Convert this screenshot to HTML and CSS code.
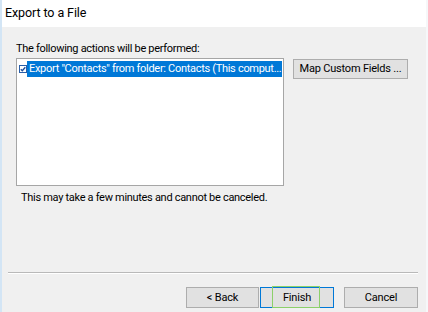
FILE: index.html
```html
<!DOCTYPE html>
<html>
<head>
<meta charset="utf-8">
<link rel="stylesheet" href="styles.css">
</head>
<body>
<div class="window">
  <div class="header"><span class="title">Export to a File</span></div>
  <div class="main">
    <div class="label">The following actions will be performed:</div>
    <div class="row">
      <div class="listbox">
        <div class="item">
          <svg class="check" width="8" height="8" viewBox="0 0 8 8"><rect x="0.5" y="0.5" width="7" height="7" fill="#fff" stroke="#2a5ea8"/><path d="M1.8 4.2 L3.3 5.7 L6.3 2.2" fill="none" stroke="#1f4e9c" stroke-width="1.4"/></svg>
          <span class="sel">Export "Contacts" from folder: Contacts (This comput...</span>
        </div>
      </div>
      <button class="btn map">Map Custom Fields ...</button>
    </div>
    <div class="note">This may take a few minutes and cannot be canceled.</div>
  </div>
  <div class="footer">
    <div class="sep"></div>
    <div class="buttons">
      <button class="btn back">&lt; Back</button>
      <button class="btn finish">Finish</button>
      <button class="btn cancel">Cancel</button>
    </div>
  </div>
</div>
</body>
</html>
```

FILE: styles.css
```css
* { box-sizing: border-box; }
html, body { margin: 0; padding: 0; }
body {
  width: 428px;
  height: 312px;
  overflow: hidden;
  font-family: Roboto, "Noto Sans", sans-serif;
  font-size: 11px;
  letter-spacing: -0.3px;
  color: #000;
}
.window {
  width: 428px;
  height: 312px;
  display: flex;
  flex-direction: column;
  background: #f0f0f0;
  border-left: 2px solid #d3e5f5;
  border-right: 2px solid #f6f7f9;
}
.header {
  height: 27px;
  background: #fff;
  padding-left: 3px;
  display: flex;
  align-items: center;
}
.title {
  font-size: 12.5px;
  letter-spacing: -0.1px;
  line-height: 16px;
  margin-top: -1px;
}
.main {
  flex: 1;
  padding: 14px 0 0 14px;
  display: flex;
  flex-direction: column;
}
.label {
  line-height: 16px;
  height: 16px;
  margin-bottom: 1px;
}
.row {
  display: flex;
  align-items: flex-start;
}
.listbox {
  width: 268px;
  height: 128px;
  background: #fff;
  border: 1px solid #a6a6a6;
  padding: 2px 1px 0 2px;
}
.item {
  display: flex;
  align-items: center;
  height: 16px;
}
.check {
  flex: none;
}
.sel {
  flex: 1;
  background: #0078d7;
  color: #fff;
  height: 16px;
  line-height: 16px;
  padding-left: 2px;
  white-space: nowrap;
  overflow: hidden;
}
.btn {
  font-family: inherit;
  font-size: 11px;
  letter-spacing: -0.2px;
  color: #000;
  background: #e1e1e1;
  border: 1px solid #adadad;
  padding: 0;
  margin: 0;
  height: 21px;
  line-height: 18px;
}
.map {
  width: 115px;
  height: 20px;
  margin-left: 9px;
  margin-top: 1px;
}
.note {
  margin-top: 4px;
  margin-left: 5px;
  line-height: 16px;
}
.footer {
  height: 40px;
  padding: 0 8px 0 6px;
}
.sep {
  height: 2px;
  border-top: 1px solid #b9b9b9;
  border-bottom: 1px solid #fff;
}
.buttons {
  display: flex;
  justify-content: flex-end;
  margin-top: 13px;
}
.back { width: 73px; }
.finish {
  width: 74px;
  margin-left: 1px;
  border-color: #0078d7;
  position: relative;
}
.finish::after {
  content: "";
  position: absolute;
  left: 11px;
  width: 46px;
  top: -2px;
  bottom: -1px;
  border: 1px solid #8cd06a;
}
.cancel {
  width: 74px;
  margin-left: 10px;
}
```
